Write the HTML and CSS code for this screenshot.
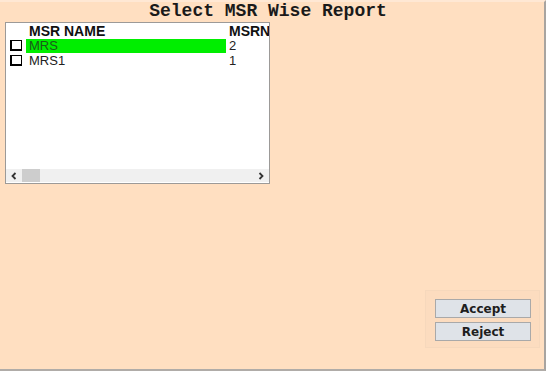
FILE: index.html
```html
<!DOCTYPE html>
<html lang="en">

<head>
    <meta charset="UTF-8">
    <title>Select MSR Wise Report</title>
    <link rel="stylesheet" href="styles.css">
</head>

<body>
    <div class="window">
        <h1 class="title">Select MSR Wise Report</h1>

        <div class="listbox">
            <div class="rows">
                <div class="row header">
                    <span class="check-cell"></span>
                    <span class="name">MSR NAME</span>
                    <span class="num">MSRNO</span>
                </div>
                <div class="row">
                    <span class="check-cell"><span class="checkbox"></span></span>
                    <span class="name selected">MRS</span>
                    <span class="num">2</span>
                </div>
                <div class="row">
                    <span class="check-cell"><span class="checkbox"></span></span>
                    <span class="name">MRS1</span>
                    <span class="num">1</span>
                </div>
            </div>
            <div class="hscroll">
                <span class="arrow">
                    <svg width="8" height="8" viewBox="0 0 8 8"><polyline points="5.5,1 2.5,4 5.5,7" fill="none" stroke="#333" stroke-width="1.8"/></svg>
                </span>
                <span class="thumb"></span>
                <span class="track"></span>
                <span class="arrow">
                    <svg width="8" height="8" viewBox="0 0 8 8"><polyline points="2.5,1 5.5,4 2.5,7" fill="none" stroke="#333" stroke-width="1.8"/></svg>
                </span>
            </div>
        </div>

        <div class="footer">
            <div class="actions">
                <button class="btn">Accept</button>
                <button class="btn">Reject</button>
            </div>
        </div>
    </div>
</body>

</html>
```

FILE: styles.css
```css
body {
    margin: 0;
    padding: 0;
    background-color: #ffdfc1;
    font-family: "Liberation Sans", Arial, sans-serif;
}

.window {
    width: 546px;
    height: 371px;
    border-right: 2px solid #a8a4a0;
    border-bottom: 2px solid #b0aca8;
    border-top: 2px solid #ffe8d4;
    box-sizing: border-box;
    display: flex;
    flex-direction: column;
    background-color: #ffdfc1;
}

.title {
    margin: 0;
    padding-right: 8px;
    height: 20px;
    line-height: 18px;
    text-align: center;
    font-family: "Liberation Mono", "Courier New", monospace;
    font-size: 18px;
    font-weight: bold;
    color: #1a1a1a;
}

.listbox {
    margin-left: 5px;
    width: 265px;
    height: 162px;
    box-sizing: border-box;
    border: 1px solid #9c9a98;
    background-color: #ffffff;
    display: flex;
    flex-direction: column;
    overflow: hidden;
}

.rows {
    flex: 1;
    padding-top: 1px;
}

.row {
    display: flex;
    align-items: center;
    height: 15px;
    font-size: 13px;
    color: #222;
    white-space: nowrap;
}

.row.header {
    height: 14px;
    font-size: 14px;
    font-weight: bold;
    color: #111;
}

.check-cell {
    width: 20px;
    padding-left: 4px;
    box-sizing: border-box;
    flex: none;
    display: flex;
}

.checkbox {
    width: 9px;
    height: 8px;
    border: 1px solid #000;
    border-left-width: 2px;
    border-bottom-width: 2px;
    background-color: #fff;
}

.name {
    width: 200px;
    flex: none;
    padding-left: 3px;
    box-sizing: border-box;
    height: 14px;
    line-height: 14px;
}

.name.selected {
    background-color: #00ee00;
    color: #1a5a1a;
}

.num {
    padding-left: 3px;
    line-height: 14px;
}

.hscroll {
    height: 13px;
    margin-bottom: 1px;
    display: flex;
    align-items: center;
    background-color: #f0f0f0;
}

.arrow {
    width: 16px;
    height: 13px;
    display: flex;
    align-items: center;
    justify-content: center;
}

.thumb {
    width: 18px;
    height: 13px;
    background-color: #cdcdcd;
}

.track {
    flex: 1;
}

.footer {
    flex: 1;
    display: flex;
    justify-content: flex-end;
    align-items: flex-end;
    padding-right: 4px;
    padding-bottom: 21px;
}

.actions {
    width: 115px;
    height: 58px;
    box-sizing: border-box;
    padding: 8px 9px 0 9px;
    border: 1px solid #f6d8bc;
    background-color: #fcdcbf;
    display: flex;
    flex-direction: column;
    gap: 4px;
}

.btn {
    width: 96px;
    height: 19px;
    padding: 0;
    border: 1px solid #a9a9a9;
    background-color: #dfe3e8;
    font-family: "DejaVu Sans", Tahoma, sans-serif;
    font-size: 12px;
    font-weight: bold;
    color: #1e1e1e;
}
```
